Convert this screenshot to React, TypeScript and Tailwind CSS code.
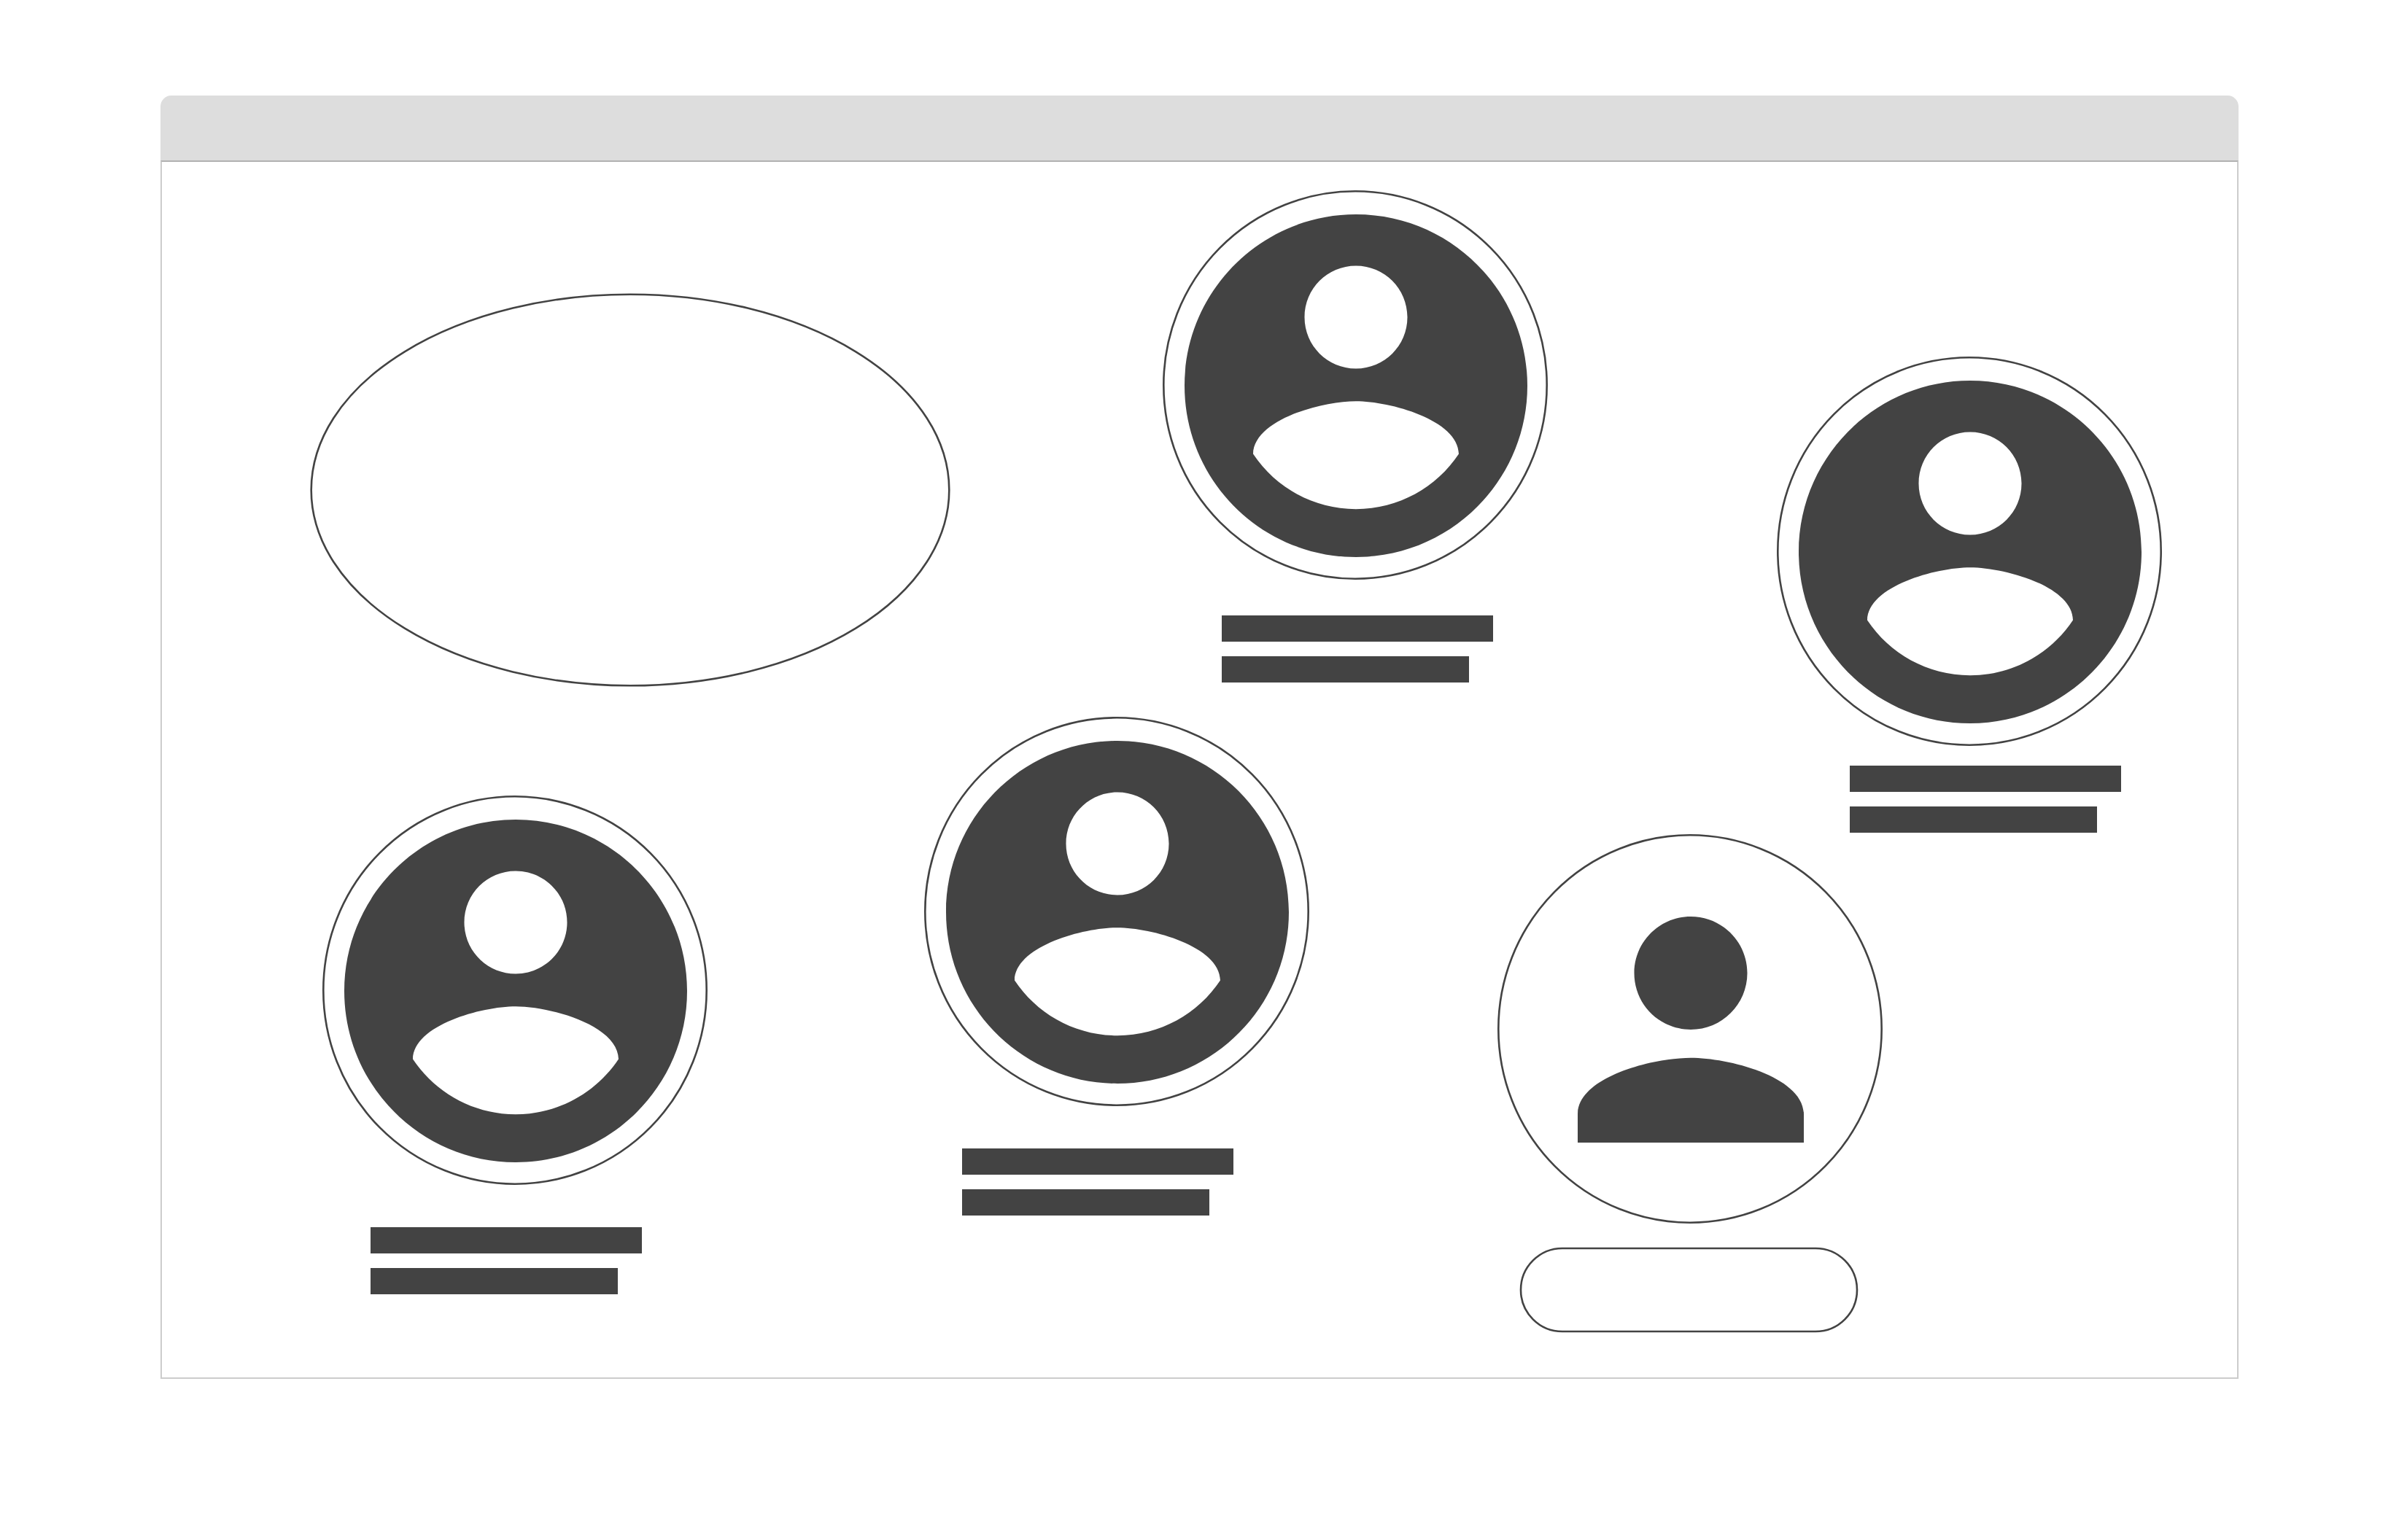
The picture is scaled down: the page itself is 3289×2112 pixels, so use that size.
type Person = {
  id: string;
  place: string;
  barsPlace: string;
};

// Places are measured from the canvas' inner top-left corner.
const people: Person[] = [
  { id: "north", place: "left-[1372px] top-[39px]", barsPlace: "left-[1453px] top-[622px]" },
  { id: "east", place: "left-[2214px] top-[267px]", barsPlace: "left-[2314px] top-[828px]" },
  { id: "centre", place: "left-[1045px] top-[761px]", barsPlace: "left-[1097px] top-[1353px]" },
  { id: "west", place: "left-[220px] top-[869px]", barsPlace: "left-[286px] top-[1461px]" },
];

function Ring() {
  return (
    <svg className="absolute inset-0 size-full" viewBox="0 0 528 534" fill="none" aria-hidden="true">
      <ellipse cx="264" cy="267" rx="262.7" ry="265.7" stroke="#434343" strokeWidth="2.6" />
    </svg>
  );
}

function Avatar({ place }: { place: string }) {
  return (
    <button type="button" aria-label="Profile" className={`absolute h-[534px] w-[528px] rounded-full ${place}`}>
      <Ring />
      <svg className="absolute top-[33px] left-[30px] size-[470px]" viewBox="2 2 20 20" fill="#434343" aria-hidden="true">
        <path d="M12 2C6.48 2 2 6.48 2 12s4.48 10 10 10 10-4.48 10-10S17.52 2 12 2zm0 3c1.66 0 3 1.34 3 3s-1.34 3-3 3-3-1.34-3-3 1.34-3 3-3zm0 14.2c-2.5 0-4.71-1.28-6-3.22.03-1.99 4-3.08 6-3.08 1.99 0 5.97 1.09 6 3.08-1.29 1.94-3.5 3.22-6 3.22z" />
      </svg>
    </button>
  );
}

function NameBars({ place }: { place: string }) {
  return (
    <div className={`absolute flex flex-col gap-5 ${place}`}>
      <div className="h-9 w-[372px] bg-[#434343]" />
      <div className="h-9 w-[339px] bg-[#434343]" />
    </div>
  );
}

export default function App() {
  return (
    <div className="min-h-screen bg-white px-[220px] pt-[131px] pb-[221px]">
      <main>
        <header className="h-[89px] rounded-t-[15px] bg-[#dddddd]" />
        <section className="relative h-[1671px] border-2 border-[#cccccc] border-t-[#b1b1b1] bg-white">
          <svg
            className="absolute top-[180px] left-[203px] h-[540px] w-[878px]"
            viewBox="0 0 878 540"
            fill="none"
            aria-hidden="true"
          >
            <ellipse cx="439" cy="270" rx="437.3" ry="268.3" stroke="#434343" strokeWidth="2.6" />
          </svg>

          {people.map((p) => (
            <div key={p.id}>
              <Avatar place={p.place} />
              <NameBars place={p.barsPlace} />
            </div>
          ))}

          <button type="button" aria-label="Add profile" className="absolute top-[922px] left-[1831px] h-[534px] w-[528px] rounded-full">
            <Ring />
            <svg className="absolute top-[113px] left-[110px] size-[310px]" viewBox="4 4 16 16" fill="#434343" aria-hidden="true">
              <path d="M12 12c2.21 0 4-1.79 4-4s-1.79-4-4-4-4 1.79-4 4 1.79 4 4 4zm0 2c-2.67 0-8 1.34-8 4v2h16v-2c0-2.66-5.33-4-8-4z" />
            </svg>
          </button>
          <button type="button" aria-label="Add" className="absolute top-[1488px] left-[1861px] h-[118px] w-[465px]">
            <svg className="size-full" viewBox="0 0 465 118" fill="none" aria-hidden="true">
              <rect x="2" y="2" width="461" height="114" rx="57" stroke="#434343" strokeWidth="2.6" />
            </svg>
          </button>
        </section>
      </main>
    </div>
  );
}
